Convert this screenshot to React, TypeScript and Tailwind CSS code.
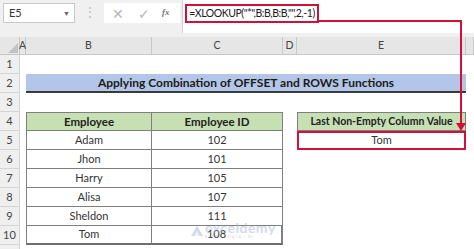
import React from "react";

const rows = [
  { name: "Adam", id: 102 },
  { name: "Jhon", id: 101 },
  { name: "Harry", id: 105 },
  { name: "Alisa", id: 107 },
  { name: "Sheldon", id: 111 },
  { name: "Tom", id: 108 },
];

const colHeaders = ["", "A", "B", "C", "D", "E", ""];

// thin cell used for empty spreadsheet space
const Blank = () => <div className="bg-white" />;

const RowHead = ({ n }: { n?: number }) => (
  <div className="flex items-center justify-center border-b border-r border-[#d4d4d4] bg-[#efefef] text-[11px] text-[#444]">
    {n}
  </div>
);

export default function App() {
  return (
    <div
      className="relative h-[249px] w-[474px] overflow-hidden bg-[#f0f0f0]"
      style={{ fontFamily: "Lato, 'Open Sans', sans-serif" }}
    >
      {/* formula bar */}
      <div className="flex h-[37px] items-start pt-[3px]">
        <div className="ml-[3px] flex h-[20px] w-[72px] items-center justify-between border border-[#c8c8c8] bg-white pl-[5px] pr-[4px] text-[11px] text-[#333]">
          <span>E5</span>
          <span className="text-[7px] text-[#666]">▼</span>
        </div>
        <div className="ml-[9px] mt-[2px] text-[12px] leading-[14px] text-[#bbb]">⋮</div>
        <div className="ml-[8px] flex h-[20px] w-[76px] items-center bg-white text-[14px] text-[#b5b5b5]">
          <span className="ml-[8px]">✕</span>
          <span className="ml-[14px]">✓</span>
          <span className="ml-[12px] text-[9px] font-bold italic text-[#777]" style={{ fontFamily: "'Liberation Serif', serif" }}>
            fx
          </span>
        </div>
        <div className="ml-[2px] -mt-[3px] flex h-[33px] flex-1 items-start border-l border-[#d0d0d0] bg-white pl-[2px] pt-[4px]">
          <div className="flex h-[19px] w-[134px] items-center justify-center whitespace-nowrap border-2 border-[#d0103a] text-[10.5px] tracking-[-0.45px] text-[#1a1a1a]">
            =XLOOKUP("*",B:B,B:B,"",2,-1)
          </div>
        </div>
      </div>

      {/* sheet */}
      <div className="grid grid-cols-[20px_6px_126px_131px_14px_169px_1fr] grid-rows-[18px_repeat(11,19px)]">
        {colHeaders.map((h, i) => (
          <div
            key={"h" + i}
            className="flex items-center justify-center border-b border-r border-[#c8c8c8] bg-[#e6e6e6] text-[10.5px] text-[#444]"
          >
            {i === 0 ? (
              <svg width="10" height="10" viewBox="0 0 10 10" className="ml-[6px] mt-[4px]">
                <polygon points="10,0 10,10 0,10" fill="#c2c2c2" />
              </svg>
            ) : (
              h
            )}
          </div>
        ))}

        {/* row 1 */}
        <RowHead n={1} />
        <Blank /><Blank /><Blank /><Blank /><Blank /><Blank />

        {/* row 2 title */}
        <RowHead n={2} />
        <Blank />
        <div className="col-span-4 flex items-center justify-center border-b-2 border-[#3a3a3a] bg-[#b4c6e7] text-[12px] font-bold text-[#1a1a1a]">
          Applying Combination of OFFSET and ROWS Functions
        </div>
        <Blank />

        {/* row 3 */}
        <RowHead n={3} />
        <Blank /><Blank /><Blank /><Blank /><Blank /><Blank />

        {/* row 4 headers */}
        <RowHead n={4} />
        <Blank />
        <div className="flex items-center justify-center border border-[#7f7f7f] bg-[#c6e0b4] text-[11.5px] font-bold text-[#222]">
          Employee
        </div>
        <div className="flex items-center justify-center border-y border-r border-[#7f7f7f] bg-[#c6e0b4] text-[11.5px] font-bold text-[#222]">
          Employee ID
        </div>
        <Blank />
        <div className="relative flex items-center justify-center border border-[#7f7f7f] bg-[#c6e0b4] text-[10.5px] font-bold text-[#222]">
          Last Non-Empty Column Value
        </div>
        <Blank />

        {rows.map((r, i) => (
          <React.Fragment key={r.name}>
            <RowHead n={i + 5} />
            <Blank />
            <div
              className={
                "flex items-center justify-center border-x border-b border-[#7f7f7f] bg-white text-[11px] text-[#333]" +
                (i === rows.length - 1 ? " border-b-2 border-b-[#6f6f6f]" : "")
              }
            >
              {r.name}
            </div>
            <div
              className={
                "flex items-center justify-center border-b border-r border-[#7f7f7f] bg-white text-[11px] text-[#333]" +
                (i === rows.length - 1 ? " border-b-2 border-r-2 border-b-[#6f6f6f]" : "")
              }
            >
              {r.id}
            </div>
            <Blank />
            {i === 0 ? (
              <div className="flex items-center justify-center border-2 border-[#d0103a] bg-white text-[11px] text-[#333]">
                Tom
              </div>
            ) : (
              <Blank />
            )}
            <Blank />
          </React.Fragment>
        ))}

        {/* row 11, mostly cut off */}
        <RowHead />
        <Blank /><Blank /><Blank /><Blank /><Blank /><Blank />
      </div>

      {/* red arrow from formula to result */}
      <svg className="pointer-events-none absolute left-0 top-0" width="474" height="249">
        <polyline points="317,21 461,21 461,124" fill="none" stroke="#d0103a" strokeWidth="2" />
        <polygon points="456,123 466,123 461,131" fill="#d0103a" />
      </svg>

      {/* watermark */}
      <div className="pointer-events-none absolute left-[191px] top-[221px] flex items-center gap-[2px] opacity-50">
        <svg width="12" height="12" viewBox="0 0 14 14">
          <polygon points="0,14 7,2 14,14" fill="#aab6d8" />
          <polygon points="4,14 7,8 10,14" fill="#dfe5f3" />
        </svg>
        <div className="flex flex-col leading-none">
          <span className="text-[14px] font-bold tracking-[0.5px] text-[#a7b5dc]">exceldemy</span>
          <span className="text-[4px] tracking-[1px] text-[#a0a8c0]">EXCEL · DATA · BI</span>
        </div>
      </div>
    </div>
  );
}
